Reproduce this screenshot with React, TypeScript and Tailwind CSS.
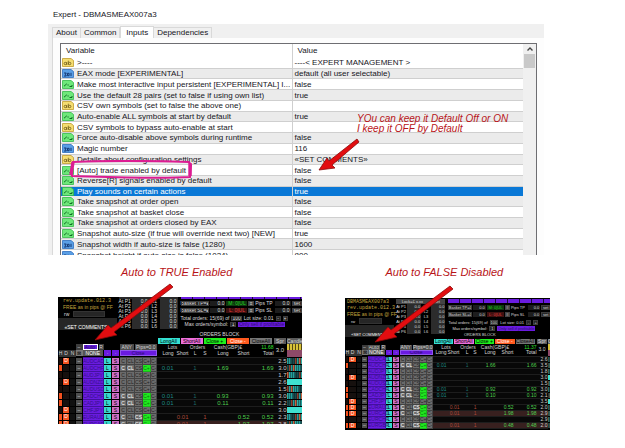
type Kind = 'ab' | 'num' | 'bool'

type Input = { kind: Kind; name: string; value: string; selected?: boolean }

const inputs: Input[] = [
    { kind: 'ab', name: '>----', value: '----< EXPERT MANAGEMENT >' },
    { kind: 'num', name: 'EAX mode [EXPERIMENTAL]', value: 'default (all user selectable)' },
    { kind: 'bool', name: 'Make most interactive input persistent [EXPERIMENTAL] I...', value: 'false' },
    { kind: 'bool', name: 'Use the default 28 pairs (set to false if using own list)', value: 'true' },
    { kind: 'ab', name: 'CSV own symbols (set to false the above one)', value: '' },
    { kind: 'bool', name: 'Auto-enable ALL symbols at start by default', value: 'true' },
    { kind: 'ab', name: 'CSV symbols to bypass auto-enable at start', value: '' },
    { kind: 'bool', name: 'Force auto-disable above symbols during runtime', value: 'false' },
    { kind: 'num', name: 'Magic number', value: '116' },
    { kind: 'ab', name: 'Details about configuration settings', value: '«SET COMMENTS»' },
    { kind: 'bool', name: '[Auto] trade enabled by default', value: 'false' },
    { kind: 'bool', name: 'Reverse[R] signals enabled by default', value: 'false' },
    { kind: 'bool', name: 'Play sounds on certain actions', value: 'true', selected: true },
    { kind: 'bool', name: 'Take snapshot at order open', value: 'false' },
    { kind: 'bool', name: 'Take snapshot at basket close', value: 'false' },
    { kind: 'bool', name: 'Take snapshot at orders closed by EAX', value: 'false' },
    { kind: 'bool', name: 'Snapshot auto-size (if true will override next two) [NEW]', value: 'true' },
    { kind: 'num', name: 'Snapshot width if auto-size is false (1280)', value: '1600' },
    { kind: 'num', name: 'Snapshot height if auto-size is false (1024)', value: '800' },
]

function KindIcon({ kind }: { kind: Kind }) {
    const fill = { ab: '#f5dd70', num: '#5a9fe6', bool: '#6ee87a' }[kind]
    const line = { ab: '#c09a2c', num: '#2f6fbe', bool: '#35b84a' }[kind]
    return (
        <svg viewBox="0 0 12 9" className="h-[9px] w-3 shrink-0">
            <path d="M.5.5h8.5l2.5 2v6h-11z" fill={fill} stroke={line} strokeWidth=".8" />
            {kind === 'bool' && <path d="M2 6.2 4.8 3.8M5.5 5h1.2M7.5 6.5h2.5V5" fill="none" stroke="#0f6b25" strokeWidth="1" />}
            {kind === 'ab' && (
                <g fill="none" stroke="#6e5a18" strokeWidth=".8">
                    <circle cx="3.3" cy="5.5" r="1.2" />
                    <path d="M4.7 4v3M6.3 2.7v4.2" />
                    <circle cx="7.7" cy="5.5" r="1.2" />
                </g>
            )}
            {kind === 'num' && (
                <path d="M2 4h2.3L3.3 5.2 4.3 7H2M5.5 4.3h1.6v2.4H5.5zM9 3.8v3.2" fill="none" stroke="#0d2c66" strokeWidth=".9" />
            )}
        </svg>
    )
}

function ExpertDialog() {
    return (
        <section className="h-[255px] overflow-hidden pt-[5px] pr-[81px] pl-12 text-[8px] text-[#16161c]">
            <h1 className="h-[19px] pl-[5px] leading-[20px]">Expert - DBMASMEAX007a3</h1>
            <div className="bg-[#f0f0f0] pl-1">
                <div role="tablist" className="flex h-[14px] items-end">
                    <button role="tab" className="h-[11px] border border-b-0 border-[#d9d9d9] px-[3px] leading-[10px]">About</button>
                    <button role="tab" className="h-[11px] border border-b-0 border-l-0 border-[#d9d9d9] px-[3px] leading-[10px]">Common</button>
                    <button role="tab" aria-selected className="h-[12px] border border-b-0 border-[#d9d9d9] bg-white px-[5px] leading-[10px]">Inputs</button>
                    <button role="tab" className="h-[11px] border border-b-0 border-l-0 border-[#d9d9d9] px-[3px] leading-[10px]">Dependencies</button>
                </div>
                <div className="border-l border-[#d9d9d9] bg-[#fdfdfd] pt-[5px] pr-[7px] pl-[7px]">
                    <div className="flex border border-[#6e6e72] bg-white">
                        <table className="h-[217px] flex-1 table-fixed border-collapse whitespace-nowrap">
                            <thead>
                                <tr className="h-[14px] text-left">
                                    <th className="w-1/2 border-r border-[#d0d0d0] p-0 pl-[5px] font-normal">Variable</th>
                                    <th className="p-0 pl-[5px] font-normal">Value</th>
                                </tr>
                            </thead>
                            <tbody>
                                {inputs.map((row) => (
                                    <tr
                                        key={row.name}
                                        className={row.selected ? 'bg-[#0a78d6] text-white' : 'border-b border-[#cfcfcf] even:bg-[#ebebeb]'}
                                    >
                                        <td className="border-r border-[#cfcfcf] p-0">
                                            <div className="flex h-[9px] items-center gap-[3px] pl-px leading-[9px]">
                                                <KindIcon kind={row.kind} />
                                                {row.name}
                                            </div>
                                        </td>
                                        <td className="p-0 pl-[2px] leading-[9px]">{row.value}</td>
                                    </tr>
                                ))}
                            </tbody>
                        </table>
                        <div className="flex w-[13px] flex-col items-center bg-[#f0f0f0]">
                            <svg viewBox="0 0 10 10" className="h-[10px] w-[10px]">
                                <path d="M2.5 6.5 5 4l2.5 2.5" fill="none" stroke="#444" strokeWidth="1.4" />
                            </svg>
                            <div className="h-[14px] w-[11px] bg-[#c9c9c9]" />
                        </div>
                    </div>
                </div>
            </div>
        </section>
    )
}

type Order = {
    pair: string
    spread: string
    side?: 'long' | 'short'
    cash?: string
    tint?: boolean
    solid?: boolean
    marks?: string
}

type Size = {
    name: string
    cols: string[]
    row: string
    bar: string
    head: string
    btn: string
    text: string
    num: string
    candle: string
    total: string
    autoOn: boolean
}

const large: Size = {
    name: 'large',
    cols: ['w-[4px]', 'w-[7px]', 'w-[6px]', 'w-[7px]', 'w-[21px]', 'w-[8px]', 'w-[8px]', 'w-[7px]', 'w-[8px]', 'w-[8px]', 'w-[8px]', 'w-[6px]', 'w-[17px]', 'w-[15px]', 'w-[8px]', 'w-[10px]', 'w-[22px]', 'w-[21px]', 'w-[24px]', 'w-[13px]', 'w-[16px]'],
    row: 'h-[7px]',
    bar: 'h-[7px]',
    head: 'h-[6px]',
    btn: 'h-[6px] leading-[6px]',
    text: 'text-[5px] leading-[5px]',
    num: 'text-[6px] leading-[6px]',
    candle: 'h-[6px]',
    total: '11.68',
    autoOn: true,
}

const small: Size = {
    name: 'small',
    cols: ['w-[3px]', 'w-[8px]', 'w-[5px]', 'w-[6px]', 'w-[18px]', 'w-[7px]', 'w-[7px]', 'w-[6px]', 'w-[7px]', 'w-[7px]', 'w-[7px]', 'w-[6px]', 'w-[14px]', 'w-[13px]', 'w-[9px]', 'w-[8px]', 'w-[19px]', 'w-[18px]', 'w-[23px]', 'w-[11px]', 'w-[3px]'],
    row: 'h-[6px]',
    bar: 'h-[6px]',
    head: 'h-[6px]',
    btn: 'h-[5px] leading-[5px]',
    text: 'text-[4px] leading-[5px]',
    num: 'text-[5px] leading-[5px]',
    candle: 'h-[5px]',
    total: '11.37',
    autoOn: false,
}

const largeOrders: Order[] = [
    { pair: 'AUDCAD', spread: '2.5', marks: 'D' },
    { pair: 'AUDCHF', spread: '3.0', side: 'long', cash: '1.69', marks: 'H' },
    { pair: 'AUDJPY', spread: '1.7' },
    { pair: 'AUDNZD', spread: '2.6', solid: true, marks: 'D' },
    { pair: 'AUDUSD', spread: '1.5' },
    { pair: 'CADCHF', spread: '3.0', side: 'long', cash: '0.93', marks: 'H' },
    { pair: 'CADJPY', spread: '2.2', side: 'long', cash: '0.11', marks: 'H' },
    { pair: 'CHFJPY', spread: '3.0', solid: true, marks: 'D' },
    { pair: 'EURAUD', spread: '2.3', side: 'short', cash: '0.52', marks: 'HD' },
    { pair: 'EURCAD', spread: '2.8', side: 'short', cash: '1.97', tint: true, marks: 'HD' },
]

const smallOrders: Order[] = [
    { pair: 'AUDCAD', spread: '2.6', marks: 'D' },
    { pair: 'AUDCHF', spread: '3.5', side: 'long', cash: '1.66', marks: 'H' },
    { pair: 'AUDJPY', spread: '1.8' },
    { pair: 'AUDNZD', spread: '3.0', solid: true, marks: 'D' },
    { pair: 'AUDUSD', spread: '1.5' },
    { pair: 'CADCHF', spread: '3.0', side: 'long', cash: '0.92', marks: 'H' },
    { pair: 'CADJPY', spread: '2.1', side: 'long', cash: '0.10', marks: 'H' },
    { pair: 'CHFJPY', spread: '3.5', solid: true, marks: 'D' },
    { pair: 'EURAUD', spread: '2.0', side: 'short', cash: '0.52', marks: 'HD' },
    { pair: 'EURCAD', spread: '2.9', side: 'short', cash: '1.98', tint: true, marks: 'HD' },
    { pair: 'EURCHF', spread: '2.9' },
    { pair: 'EURGBP', spread: '2.0', side: 'short', cash: '0.48', tint: true, marks: 'HD' },
]

const stripes = ['#22a09c', '#174c4e', '#c8603f', '#22a09c', '#8c3f2e', '#2cb0a8', '#1a4a4c', '#22a09c']

function Candles({ solid, shift, className }: { solid?: boolean; shift: number; className: string }) {
    return (
        <svg viewBox="0 0 16 6" preserveAspectRatio="none" className={`block w-full ${className}`}>
            <rect width="16" height="6" fill={solid ? '#3fe0d0' : '#0c1c1e'} />
            {!solid &&
                stripes.map((_, i) => (
                    <rect key={i} x={i * 2} width="1.5" height="6" fill={stripes[(i * 3 + shift) % stripes.length]} />
                ))}
        </svg>
    )
}

function OrdersTable({ size, orders }: { size: Size; orders: Order[] }) {
    const btn = `block w-full text-center ${size.btn}`
    return (
        <table className="w-full table-fixed border-collapse text-[5px] leading-[5px] whitespace-nowrap text-[#d6d6d6] [&_td]:p-0 [&_th]:p-0 [&_th]:font-normal">
            <colgroup>
                {size.cols.map((c, i) => (
                    <col key={i} className={c} />
                ))}
            </colgroup>
            <thead>
                <tr className={size.bar}>
                    <td colSpan={12} />
                    <td colSpan={7}>
                        <div className="flex gap-px pr-px pl-px text-black">
                            <button className={`flex-1 bg-[#34e0d2] ${btn}`}>LongAll</button>
                            <button className={`flex-1 bg-[#ee6fdc] ${btn}`}>ShortAll</button>
                            <button className={`flex-1 bg-[#1df01d] ${btn}`}>Close +</button>
                            <button className={`flex-1 bg-[#ff5a1f] text-white ${btn}`}>Close -</button>
                            <button className={`flex-1 bg-[#767676] ${btn}`}>CloseAll</button>
                        </div>
                    </td>
                    <td className="border-x border-black"><button className={`bg-[#5a5a5a] ${btn}`}>Spr</button></td>
                    <td><button className={`bg-[#5a5a5a] ${btn}`}>{size.autoOn ? 'Candle' : 'C'}</button></td>
                </tr>
                <tr className={size.head}>
                    <td colSpan={3} />
                    <td><button className={`bg-[#3c3c3c] ${btn}`}>–</button></td>
                    <td>
                        <div className="flex gap-px">
                            <button className={`flex-[3] outline outline-offset-[-1px] ${size.autoOn ? 'bg-[#6320d8] text-[#2c0b70] outline-white' : 'bg-[#3c3c3c] outline-[#555]'} ${btn}`}>
                                Auto
                            </button>
                            <button className={`flex-1 bg-[#3c3c3c] ${btn}`}>R</button>
                        </div>
                    </td>
                    <td colSpan={2} />
                    <td colSpan={2}><button className={`bg-[#4c4c4c] ${btn}`}>ANY</button></td>
                    <td colSpan={3} className="border-l border-black"><button className={`bg-[#4c4c4c] ${btn}`}>Pips=0.0</button></td>
                    <th colSpan={2}>Lots</th>
                    <th colSpan={2}>Orders</th>
                    <th colSpan={2}>Cash(GBP)£</th>
                    <td className="text-right text-[#2fe02f]">{size.total}</td>
                    <td rowSpan={2} className={`text-center ${size.num}`}>3.0</td>
                    <td className="bg-[repeating-linear-gradient(90deg,#d8c13a_0_2px,#554a12_2px_3px)]" />
                </tr>
                <tr className={size.bar}>
                    <th className="bg-[#333]">H</th>
                    <th className="bg-[#333]">D</th>
                    <th className="bg-[#333]">N</th>
                    <td><button className={`bg-[#777] text-black ${btn}`}>⊠</button></td>
                    <td><button className={`bg-[#555] text-white ${btn}`}>NONE</button></td>
                    <td className="border-x border-black"><button className={`bg-[#6a1be0] ${btn}`}>·</button></td>
                    <td className="border-x border-black"><button className={`bg-[#6a1be0] ${btn}`}>·</button></td>
                    <td colSpan={5}><button className={`bg-[#6a1be0] text-[#2c0b70] outline outline-offset-[-1px] outline-[#8f56ee] ${btn}`}>Close</button></td>
                    <th className="text-right">Long</th>
                    <th className="text-right">Short</th>
                    <th className="text-right">L</th>
                    <th className="text-right">S</th>
                    <th className="text-right">Long</th>
                    <th className="text-right">Short</th>
                    <th className="text-right">Total</th>
                    <td className="bg-[#8d4a68]" />
                </tr>
            </thead>
            <tbody>
                {orders.map((o, i) => {
                    const long = o.side === 'long'
                    const short = o.side === 'short'
                    const mark = 'border border-black'
                    const grey = 'border border-[#444] bg-[#6b6b6b]'
                    const cell = `border-y border-[#1d1d1d] text-right ${size.num}`
                    return (
                        <tr key={o.pair} className={`${size.row} ${o.tint ? 'bg-[#38201f]' : 'bg-[#080808]'}`}>
                            <td className={`${mark} ${o.marks?.includes('H') ? 'bg-[#f4511e]' : 'bg-[#1c0d08]'}`} />
                            <td className={`${mark} text-center ${o.marks?.includes('D') ? 'bg-[#f4511e] text-white' : 'bg-[#16100e]'}`}>
                                {o.marks?.includes('D') ? 'D' : ''}
                            </td>
                            <td className={`${mark} bg-[#101010]`} />
                            <td className={`${mark} bg-[#4e4e4e]`}><button className={btn}>–</button></td>
                            <td className="border border-[#4310a0] bg-[#6a1be0]"><button className={`text-[#34108a] ${btn}`}>{o.pair}</button></td>
                            <td className={`${mark} bg-[#38d8cc]`}><button className={`text-black ${btn}`}>L</button></td>
                            <td className={`${mark} bg-[#cf6fc6]`}><button className={`text-black ${btn}`}>S</button></td>
                            <td className={grey}><button className={`${o.side ? 'text-white' : 'text-[#222]'} ${btn}`}>C</button></td>
                            <td className={grey}><button className={`${long ? 'text-white' : 'text-[#222]'} ${btn}`}>CL</button></td>
                            <td className={grey}><button className={`${short ? 'text-white' : 'text-[#222]'} ${btn}`}>CS</button></td>
                            <td className={o.side ? 'border border-[#1bb81b] bg-[#1fe81f]' : grey}><button className={`${o.side ? 'text-[#0d7a0d]' : 'text-[#222]'} ${btn}`}>C+</button></td>
                            <td className={grey}><button className={`text-[#222] ${btn}`}>C-</button></td>
                            <td className={`${cell} text-[#1e8a84]`}>{long ? '0.01' : ''}</td>
                            <td className={`${cell} text-[#a84a3a]`}>{short ? '0.01' : ''}</td>
                            <td className={`${cell} text-[#1e6a66]`}>{long ? '1' : ''}</td>
                            <td className={`${cell} text-[#a84a3a]`}>{short ? '1' : ''}</td>
                            <td className={`${cell} text-[#4fcf4f]`}>{long ? o.cash : ''}</td>
                            <td className={`${cell} text-[#4fcf4f]`}>{short ? o.cash : ''}</td>
                            <td className={`${cell} text-[#4fcf4f]`}>{o.cash}</td>
                            <td className={`${cell} text-[#cfcfcf]`}>{o.spread}</td>
                            <td className="border-y border-black"><Candles solid={o.solid} shift={i} className={size.candle} /></td>
                        </tr>
                    )
                })}
            </tbody>
        </table>
    )
}

const box = 'bg-[#262626] text-center outline outline-offset-[-1px] outline-[#3d3d3d]'

function Banner({ id, title }: { id: string; title?: boolean }) {
    return (
        <div className="w-[24%] shrink-0">
            <div className={`font-[Liberation_Mono] leading-[6px] text-[#c2a43c] ${title ? 'pl-[2px] text-[5px]' : 'pl-[5px] text-[5px]'}`}>
                {title ? <p>DBMASMEAX007a3</p> : <p className="-mt-[5px]">DBMASMEAX007a3</p>}
                <p>rev.update.012.3</p>
                <p className="font-[Liberation_Sans]">FREE as in pips @ FF</p>
            </div>
            <div className="flex items-center gap-1 py-px pl-[6px]">
                <label htmlFor={id}>rw</label>
                <input id={id} className="h-[6px] w-0 flex-1 border border-[#333] bg-[#262626]" />
                <span className="w-2" />
            </div>
            <div className="flex h-[12px] items-end justify-center bg-[#262626] text-white">«SET COMMENTS»</div>
        </div>
    )
}

function Prices({ lock }: { lock?: boolean }) {
    return (
        <div className="flex w-[25%] shrink-0 flex-col pl-[2px]">
            {lock ? (
                <div className="flex justify-around bg-[#444]"><span>Lock=£ x.xx</span><span>set</span></div>
            ) : (
                <div className="h-[2px] bg-[#2a2a2a]" />
            )}
            {[1, 2, 3, 4, 5, 6].map((n) => (
                <div key={n} className="grid grid-cols-[12fr_16fr_9fr_17fr] items-center gap-x-px">
                    <span>At P{n}</span>
                    <span className="bg-[#2c2c2c] pr-px text-right">0.0</span>
                    <span className="text-center">L{n}</span>
                    <span className="bg-[#2c2c2c] pr-px text-right">0.0</span>
                </div>
            ))}
        </div>
    )
}

function Baskets({ strip }: { strip: string }) {
    return (
        <div className="min-w-0 flex-1 pl-[3px]">
            <div className={`mb-px bg-[repeating-linear-gradient(90deg,#6a1be0_0_11px,#1b0a38_11px_12px)] ${strip}`} />
            {['TP', 'SL'].map((t) => (
                <div key={t} className="grid h-[7px] grid-cols-[30fr_16fr_22fr_6fr_20fr_16fr_11fr] items-center gap-x-px">
                    <span className={box}>Basket {t}=£</span>
                    <span className="bg-[#1d1d1d] pr-px text-right">0.0</span>
                    <span className={t === 'TP' ? 'bg-[#0f3a0f] text-center text-[#25d025]' : 'bg-[#3f1010] text-center text-[#e04040]'}>
                        {t === 'TP' ? 'M: 0|UL' : 'L: 0|UL'}
                    </span>
                    <span className="bg-[#444] text-center">≡</span>
                    <span>Pips {t}</span>
                    <span className="bg-[#1d1d1d] pr-px text-right">0.0</span>
                    <button className={box}>set</button>
                </div>
            ))}
            <div className="mt-px flex h-[6px] items-center gap-[2px]">
                <span>Total orders: 15(69) of</span>
                <span className={`px-px ${box}`}>100</span>
                <span>Lot size: 0.01</span>
                <button className={`w-[5px] ${box}`}>-</button>
                <button className={`w-[5px] ${box}`}>+</button>
            </div>
            <div className="flex h-[6px] items-center gap-[2px] pl-1">
                <span>Max orders/symbol:</span>
                <span className={`w-[6px] ${box}`}>1</span>
                <button className="bg-[#6a1be0] px-px text-[#2c0b70]">Only sell if profitable</button>
            </div>
        </div>
    )
}

function TradePanel({ size, orders }: { size: Size; orders: Order[] }) {
    return (
        <div className={`h-full overflow-hidden bg-black whitespace-nowrap text-[#dcdcdc] ${size.text}`}>
            <div className={size.autoOn ? 'flex h-[34px]' : 'flex h-[34px] pt-px'}>
                <Banner id={`rw-${size.name}`} title={!size.autoOn} />
                <Prices lock={!size.autoOn} />
                <Baskets strip={size.autoOn ? 'h-[2px]' : 'h-[4px]'} />
            </div>
            <p className="h-[6px] pl-[58%] leading-[6px]">ORDERS BLOCK</p>
            <OrdersTable size={size} orders={orders} />
        </div>
    )
}

function Arrow({ points, className }: { points: string; className: string }) {
    return (
        <svg viewBox="0 0 80 58" className={`pointer-events-none absolute z-10 ${className}`}>
            <polygon points={points} fill="#e20d10" stroke="#8a0a0a" strokeWidth=".8" />
        </svg>
    )
}

export default function App() {
    return (
        <main className="relative min-h-screen bg-white font-['Liberation_Sans',sans-serif]">
            <ExpertDialog />

            {/* annotations over the inputs list */}
            <div className="absolute top-[114px] left-[357px] text-[10px] leading-[10px] text-[#b81418] italic">
                <p>YOu can keep it Default Off or ON</p>
                <p>I keep it OFF by Default</p>
            </div>
            <Arrow className="top-[138px] left-[318px] h-[58px] w-[80px]" points="1,32 9,20 11,23 39,1 41,4 14,27 17,30" />
            <svg viewBox="0 0 126 20" className="pointer-events-none absolute top-[160px] left-[68px] h-5 w-[126px]">
                <path d="M5 2C40 .5 90 1 121 2l2 3-1 12C90 19 40 17 4 16L3 12z" fill="none" stroke="#dc1c92" strokeWidth="2" />
                <path d="M5 2 3 15M122 3v13" stroke="#dc1c92" strokeWidth="3.4" />
            </svg>

            <section className="flex pr-[75px] pl-[58px] text-[11px] leading-[14px] text-[#b81418] italic">
                <h2 className="flex-[287] pt-[10px] pl-[63px]">Auto to TRUE Enabled</h2>
                <h2 className="flex-[205] pt-[10px] pl-[34px]">Auto to FALSE Disabled</h2>
            </section>
            <Arrow className="top-[283px] left-[94px] h-[58px] w-[80px]" points="1,57 14,42 17,45 76,1 79,4 20,49 23,52" />
            <Arrow className="top-[285px] left-[374px] h-[58px] w-[80px]" points="1,57 14,42 17,45 76,1 79,4 20,49 23,52" />

            <section className="flex items-start gap-[43px] pt-[18px] pr-[75px] pl-[58px]">
                <div className="h-[127px] min-w-0 flex-[244]">
                    <TradePanel size={large} orders={largeOrders} />
                </div>
                <div className="mt-px h-[132px] min-w-0 flex-[205]">
                    <TradePanel size={small} orders={smallOrders} />
                </div>
            </section>
        </main>
    )
}
